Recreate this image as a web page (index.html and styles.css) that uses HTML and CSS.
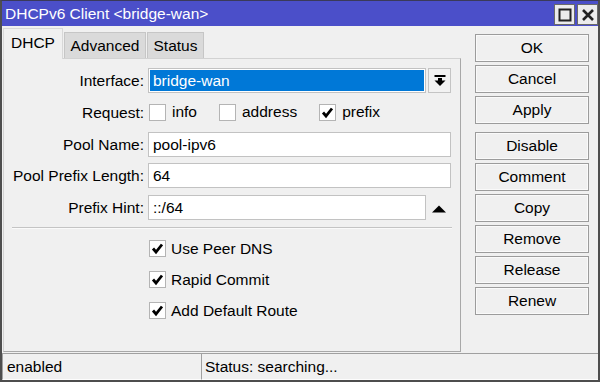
FILE: index.html
```html
<!DOCTYPE html>
<html>
<head>
<meta charset="utf-8">
<link rel="stylesheet" href="styles.css">
</head>
<body>
<div class="window">
  <div class="titlebar">
    <span class="title">DHCPv6 Client &lt;bridge-wan&gt;</span>
    <div class="tbtns">
      <span class="tbtn"><svg width="14" height="14" viewBox="0 0 14 14"><rect x="1.5" y="1.5" width="11" height="11" fill="none" stroke="#222" stroke-width="2"/></svg></span>
      <span class="tbtn"><svg width="14" height="14" viewBox="0 0 14 14"><path d="M2 2L12 12M12 2L2 12" stroke="#222" stroke-width="2.6"/></svg></span>
    </div>
  </div>
  <div class="main">
    <div class="left">
      <div class="tabs">
        <div class="tab active">DHCP</div>
        <div class="tab">Advanced</div>
        <div class="tab">Status</div>
      </div>
      <div class="panel">
        <div class="form">
          <div class="lbl">Interface:</div>
          <div class="field">
            <div class="input sel"><span class="selfill">bridge-wan</span></div>
            <div class="ddbtn"><svg width="12" height="11" viewBox="0 0 12 11"><rect x="0.5" y="0" width="11" height="2" fill="#000"/><rect x="4" y="3" width="4" height="3" fill="#000"/><polygon points="0.5,5.5 11.5,5.5 6,11" fill="#000"/></svg></div>
          </div>
          <div class="lbl">Request:</div>
          <div class="field req">
            <span class="cb"></span><span class="cbt">info</span>
            <span class="cb"></span><span class="cbt">address</span>
            <span class="cb"><svg width="15" height="15" viewBox="0 0 15 15"><polyline points="3,7.5 6,11 12,3.5" fill="none" stroke="#000" stroke-width="2.8"/></svg></span><span class="cbt">prefix</span>
          </div>
          <div class="lbl">Pool Name:</div>
          <div class="field"><div class="input full">pool-ipv6</div></div>
          <div class="lbl">Pool Prefix Length:</div>
          <div class="field"><div class="input full">64</div></div>
          <div class="lbl">Prefix Hint:</div>
          <div class="field">
            <div class="input">::/64</div>
            <div class="uparrow"><svg width="14" height="8" viewBox="0 0 14 8"><polygon points="0,7.5 14,7.5 7,0.5" fill="#000"/></svg></div>
          </div>
        </div>
        <div class="sep"></div>
        <div class="opts">
          <div class="opt"><span class="cb"><svg width="15" height="15" viewBox="0 0 15 15"><polyline points="3,7.5 6,11 12,3.5" fill="none" stroke="#000" stroke-width="2.8"/></svg></span><span class="cbt">Use Peer DNS</span></div>
          <div class="opt"><span class="cb"><svg width="15" height="15" viewBox="0 0 15 15"><polyline points="3,7.5 6,11 12,3.5" fill="none" stroke="#000" stroke-width="2.8"/></svg></span><span class="cbt">Rapid Commit</span></div>
          <div class="opt"><span class="cb"><svg width="15" height="15" viewBox="0 0 15 15"><polyline points="3,7.5 6,11 12,3.5" fill="none" stroke="#000" stroke-width="2.8"/></svg></span><span class="cbt">Add Default Route</span></div>
        </div>
      </div>
    </div>
    <div class="buttons">
      <div class="btn">OK</div>
      <div class="btn">Cancel</div>
      <div class="btn">Apply</div>
      <div class="btn gap">Disable</div>
      <div class="btn">Comment</div>
      <div class="btn">Copy</div>
      <div class="btn">Remove</div>
      <div class="btn">Release</div>
      <div class="btn">Renew</div>
    </div>
  </div>
  <div class="statusbar">
    <div class="cell c1">enabled</div>
    <div class="cell c2">Status: searching...</div>
  </div>
</div>
</body>
</html>
```
FILE: styles.css
```css
* { box-sizing: border-box; }
html, body { margin: 0; padding: 0; }
body {
  width: 600px;
  height: 382px;
  font-family: "Liberation Sans", Arial, sans-serif;
  font-size: 15.5px;
  color: #000;
  background: #f0f0f0;
}
.window {
  width: 600px;
  height: 382px;
  border-left: 2px solid #4e4e4e;
  border-right: 2px solid #4e4e4e;
  border-bottom: 2px solid #4e4e4e;
  border-top: 1px solid #3a3a5a;
  background: #f0f0f0;
  display: flex;
  flex-direction: column;
}
.titlebar {
  height: 25px;
  background: #4b4fc9;
  color: #fff;
  display: flex;
  align-items: center;
  justify-content: space-between;
  padding-left: 3px;
}
.title { line-height: 25px; }
.tbtns { display: flex; gap: 2px; align-self: flex-start; margin-top: 3px; }
.tbtn {
  width: 21px;
  height: 21px;
  background: #ececec;
  border: 1px solid #6a6a6a;
  display: flex;
  align-items: center;
  justify-content: center;
}
.main {
  height: 326px;
  display: flex;
}
.left {
  width: 459px;
  padding-left: 1px;
  padding-top: 2px;
  display: flex;
  flex-direction: column;
}
.tabs {
  display: flex;
  align-items: flex-end;
  height: 30px;
}
.tab {
  height: 26px;
  line-height: 25px;
  background: #dadada;
  border: 1px solid #c6c6c6;
  border-bottom: none;
  margin-right: 1px;
  text-align: center;
}
.tab.active {
  height: 31px;
  margin-bottom: -1px;
  background: #f0f0f0;
  border-color: #d8d8d8;
  width: 60px;
  line-height: 28px;
  position: relative;
  z-index: 1;
}
.tab:nth-child(2) { width: 82px; }
.tab:nth-child(3) { width: 57px; }
.panel {
  flex: 1;
  border-top: 1px solid #d2d2d2;
  border-left: 1px solid #d2d2d2;
  border-right: 1px solid #a8a8a8;
  border-bottom: 1px solid #a8a8a8;
  padding-top: 9px;
}
.form {
  display: grid;
  grid-template-columns: 132px 1fr;
  grid-auto-rows: 25px;
  column-gap: 4px;
  row-gap: 6.75px;
  padding-left: 8px;
  padding-right: 8px;
}
.lbl {
  text-align: right;
  line-height: 25px;
  white-space: nowrap;
}
.field {
  display: flex;
  align-items: center;
  height: 25px;
}
.input {
  width: 278px;
  height: 25px;
  background: #fff;
  border: 1px solid #c2c2c2;
  padding-left: 4px;
  line-height: 23px;
}
.input.full { width: 303px; }
.input.sel { padding: 1px; }
.selfill {
  display: block;
  height: 100%;
  background: #0078d7;
  color: #fff;
  padding-left: 3px;
  line-height: 21px;
}
.ddbtn {
  width: 23px;
  height: 25px;
  margin-left: 2px;
  border: 1px solid #c4c4c4;
  background: #f2f2f2;
  display: flex;
  align-items: center;
  justify-content: center;
}
.uparrow {
  width: 25px;
  height: 25px;
  display: flex;
  align-items: center;
  justify-content: center;
  padding-left: 1px;
  padding-top: 2px;
}
.cb {
  width: 17px;
  height: 17px;
  background: #fff;
  border: 1px solid #b4b4b4;
  display: inline-flex;
  align-items: center;
  justify-content: center;
  flex-shrink: 0;
}
.req .cb:first-child { margin-left: 1px; }
.cbt { margin-left: 6px; margin-right: 22px; }
.sep {
  margin: 7px 8px 0 8px;
  border-top: 1px solid #c4c4c4;
  border-bottom: 1px solid #fafafa;
}
.opts {
  padding-left: 145px;
  padding-top: 7px;
  display: flex;
  flex-direction: column;
  gap: 6.2px;
}
.opt {
  height: 25px;
  display: flex;
  align-items: center;
}
.opt .cbt { margin-left: 5px; }
.buttons {
  margin-left: 14px;
  width: 114px;
  padding-top: 8px;
  display: flex;
  flex-direction: column;
  gap: 3px;
}
.btn {
  height: 28px;
  border: 1px solid #9c9c9c;
  box-shadow: inset 0 0 0 1px #fafafa;
  background: #f0f0f0;
  text-align: center;
  line-height: 26px;
}
.btn.gap { margin-top: 5px; }
.statusbar {
  height: 28px;
  display: flex;
  padding-top: 1px;
}
.cell {
  height: 27px;
  border-top: 1px solid #a0a0a0;
  border-left: 1px solid #a0a0a0;
  border-bottom: 1px solid #fdfdfd;
  line-height: 25px;
  padding-left: 4px;
}
.c1 { width: 199px; }
.c2 { flex: 1; padding-left: 3px; }
```
